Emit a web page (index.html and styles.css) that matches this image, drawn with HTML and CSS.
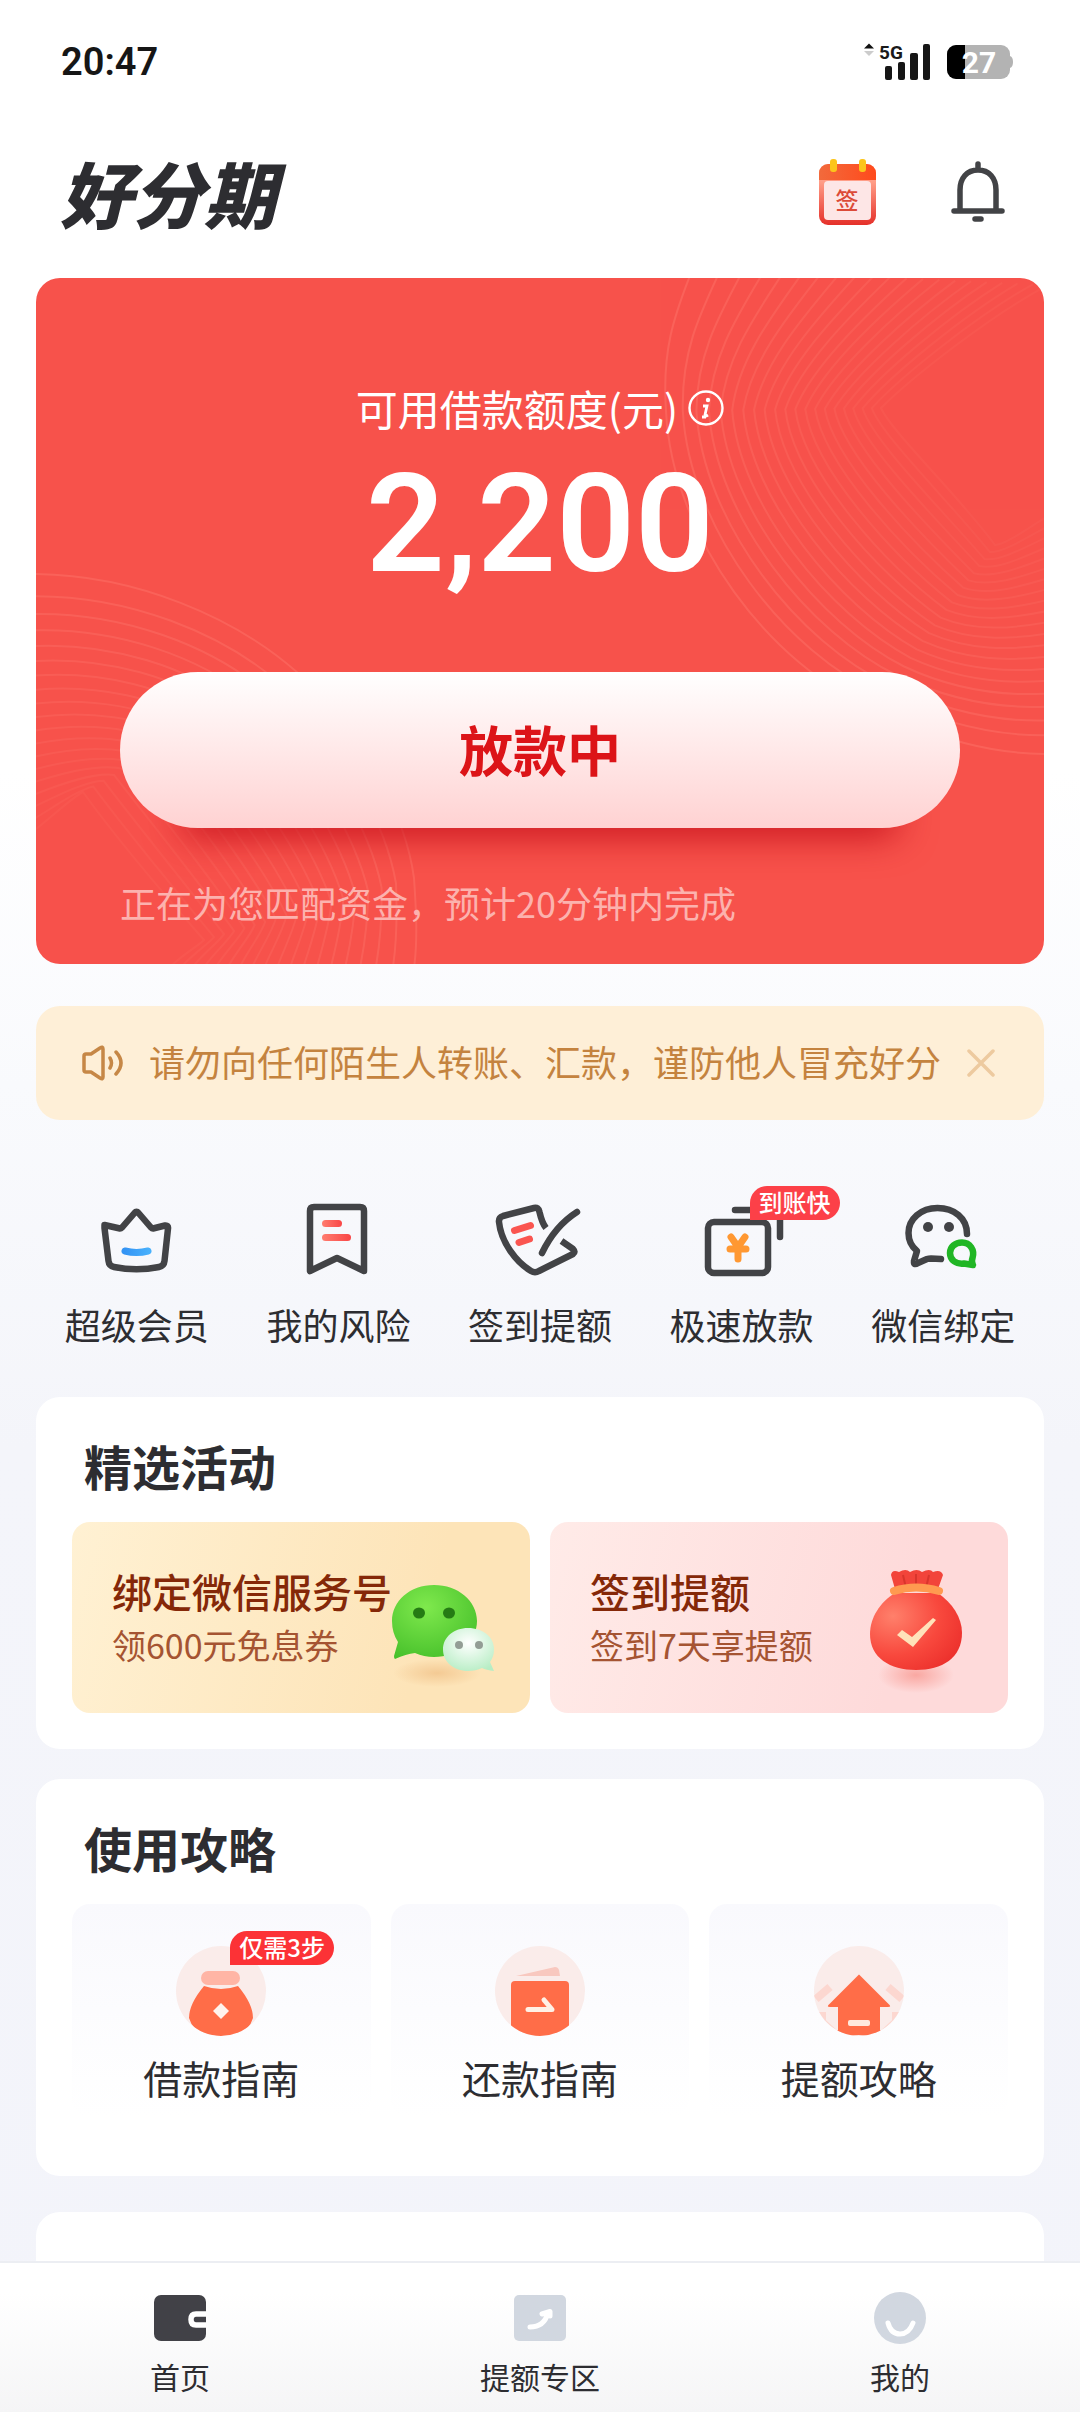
FILE: index.html
```html
<!DOCTYPE html>
<html lang="zh-CN">
<head>
<meta charset="utf-8">
<meta name="viewport" content="width=device-width, initial-scale=1">
<title>好分期</title>
<link rel="stylesheet" href="styles.css">
</head>
<body>
<div class="status">
  <time class="clock">20:47</time>
  <div class="status-icons">
    <svg class="signal" width="70" height="48" viewBox="0 -4 70 48" role="img" aria-label="5G">
      <path d="M4 6.500L9 1.500L14 6.500Z" fill="#111"/>
      <path d="M4 9L9 14L14 9Z" fill="#ccc"/>
      <text x="19" y="17" font-size="19" font-weight="700" font-family="Roboto, sans-serif" fill="#1a1a1a">5G</text>
      <g fill="#161616"><rect x="25" y="24" width="7" height="14" rx="2"/><rect x="38" y="20" width="7" height="18" rx="2"/><rect x="50" y="11" width="8" height="27" rx="2"/><rect x="63" y="2" width="7" height="36" rx="2"/></g>
    </svg>
    <svg width="66" height="36" viewBox="0 0 66 36" role="img" aria-label="27%">
      <rect x="0" y="1" width="63" height="34" rx="9" fill="#b3b3b3"/>
      <path d="M63 12Q66 13 66 18T63 24Z" fill="#b3b3b3"/>
      <path d="M9 1H18V35H9A9 9 0 0 1 0 26V10A9 9 0 0 1 9 1Z" fill="#000"/>
      <text x="32" y="29" text-anchor="middle" font-size="30" font-weight="700" font-family="Roboto, sans-serif" fill="#fff">27</text>
    </svg>
  </div>
</div>

<header class="top">
  <h1 class="logo">好分期</h1>
  <div class="top-actions">
    <button class="icon-btn" aria-label="签到">
      <svg width="58" height="68" viewBox="0 0 58 68">
        <defs>
          <linearGradient id="calBody" x1="0" y1="0" x2="0" y2="1"><stop offset="0" stop-color="#ffb09c"/><stop offset=".3" stop-color="#ff9c86"/><stop offset="1" stop-color="#e5302a"/></linearGradient>
          <linearGradient id="calTop"><stop offset="0" stop-color="#f26a3c"/><stop offset="1" stop-color="#ff4a1c"/></linearGradient>
        </defs>
        <rect x="0" y="6" width="57" height="61" rx="9" fill="url(#calBody)"/>
        <path d="M0 22V15A9 9 0 0 1 9 6H48A9 9 0 0 1 57 15V22Z" fill="url(#calTop)"/>
        <rect x="5" y="23" width="47" height="39" rx="4" fill="#fde6e6"/>
        <rect x="11" y="1" width="7" height="13" rx="3" fill="#fcc51b"/><rect x="40" y="1" width="7" height="13" rx="3" fill="#fcc51b"/>
        <text x="28" y="51" text-anchor="middle" font-size="23" font-weight="500" font-family="Noto Sans CJK SC, sans-serif" fill="#dc4b38">签</text>
      </svg>
    </button>
    <button class="icon-btn" aria-label="消息">
      <svg width="54" height="64" viewBox="0 0 54 64" fill="none" stroke="#424346" stroke-width="5.500" stroke-linecap="round">
        <path d="M27 4V9M9 50V30C9 18 16 10 27 10S45 18 45 30V50M3 51H51M24 59H30"/>
      </svg>
    </button>
  </div>
</header>

<main class="content">
  <section class="hero">
    <svg class="waves waves-right" width="386" height="490" viewBox="0 0 386 490" aria-hidden="true"></svg>
    <svg class="waves waves-left" width="390" height="400" viewBox="0 0 390 400" aria-hidden="true"></svg>
    <p class="hero-label">可用借款额度(元)
      <svg width="36" height="36" viewBox="0 0 36 36" role="img" aria-label="说明"><circle cx="18" cy="18" r="16.500" fill="none" stroke="#fff" stroke-width="2.400"/><circle cx="20" cy="10" r="2.200" fill="#fff"/><path d="M15 16H19L17 25Q17 27 20 25M14 27H18" fill="none" stroke="#fff" stroke-width="2.800"/></svg>
    </p>
    <p class="amount">2,200</p>
    <button class="loan-btn">放款中</button>
    <p class="hero-hint">正在为您匹配资金，预计20分钟内完成</p>
  </section>

  <div class="notice">
    <svg width="44" height="38" viewBox="0 0 44 38" fill="none" stroke="#c68746" stroke-width="3.500" stroke-linejoin="round" stroke-linecap="round"><path d="M4 12Q4 10 6 10H11L20 4Q23 2 23 5V33Q23 36 20 34L11 28H6Q4 28 4 26ZM30 14Q33 19 30 24M36 8Q46 19 36 30"/></svg>
    <p class="notice-text">请勿向任何陌生人转账、汇款，谨防他人冒充好分</p>
    <button class="icon-btn" aria-label="关闭"><svg width="28" height="28" viewBox="0 0 28 28" stroke="#edca9f" stroke-width="3.500" stroke-linecap="round"><path d="M2 2L26 26M26 2L2 26"/></svg></button>
  </div>

  <nav class="quick">
    <a class="quick-item" href="#vip">
      <svg width="96" height="80" viewBox="0 0 96 80"><defs><linearGradient id="blue" gradientUnits="userSpaceOnUse" x1="36" y1="0" x2="60" y2="0"><stop offset="0" stop-color="#3494f4"/><stop offset="1" stop-color="#48b0fc"/></linearGradient><linearGradient id="red"><stop offset="0" stop-color="#ff7d70"/><stop offset="1" stop-color="#f94646"/></linearGradient></defs>
        <path class="ink" d="M15.500 25L31 28.500Q32 28.500 33 27.500L45.500 13Q47.500 10.500 49.500 13L62 27.500Q63 28.500 64 28.500L76 25.500Q79.500 25 79 28.500L75.500 61Q75 66 70 67Q47.500 71.500 25 67Q20 66 19.500 61L15.500 28Z"/>
        <path d="M36 51Q47.500 54 59 51" fill="none" stroke="url(#blue)" stroke-width="7" stroke-linecap="round"/></svg>
      <span>超级会员</span>
    </a>
    <a class="quick-item" href="#risk">
      <svg width="96" height="80" viewBox="0 0 96 80"><path class="ink" d="M20 11Q20 7 24 7H70Q74 7 74 11V71L47 58L20 71Z"/><rect x="32" y="20" width="20" height="7" rx="3.500" fill="url(#red)"/><rect x="32" y="34" width="29" height="7" rx="3.500" fill="url(#red)"/></svg>
      <span>我的风险</span>
    </a>
    <a class="quick-item" href="#sign">
      <svg width="96" height="80" viewBox="0 0 96 80"><path class="ink butt" d="M54 28Q50 23 47.500 12Q46.500 7 42 8L11 16Q6.500 17.500 7 22C9 42 24 62 39 71Q43 73.500 47 71L81 54Q84 52 81 49L69.500 41"/><path class="ink" d="M85 12Q63 26 50 53"/><path d="M22.500 30.500L38.500 25.500M27 42.500L37.500 39" fill="none" stroke="#fa5550" stroke-width="7" stroke-linecap="round"/></svg>
      <span>签到提额</span>
    </a>
    <a class="quick-item" href="#fast">
      <svg width="96" height="80" viewBox="0 0 96 80"><rect class="ink" x="14" y="22" width="60" height="51" rx="6"/><path class="ink" d="M41 10H80Q86 10 86 16V37"/><path d="M37 37L44 47L51 37M36 49H52M44 49V59" fill="none" stroke="#ff9832" stroke-width="7" stroke-linecap="round" stroke-linejoin="round"/></svg>
      <em class="badge">到账快</em>
      <span>极速放款</span>
    </a>
    <a class="quick-item" href="#wechat">
      <svg width="96" height="80" viewBox="0 0 96 80"><path class="ink" d="M72 34C72 18 59 8 42.500 8S13.500 19 13.500 33Q13.500 44 22 51L19 61Q18.500 66 23 63L32 59Q33.500 58.500 36 58.500L46 59"/><circle cx="33" cy="27" r="5" fill="#424346"/><circle cx="54" cy="27" r="5" fill="#424346"/><path d="M67 42.500C60 42.500 55 47 55 53C55 60 61 64.500 69 63.500L78 65Q76 62 77.500 58C80 50 75 42.500 67 42.500Z" fill="none" stroke="#21b625" stroke-width="6.500" stroke-linejoin="round"/></svg>
      <span>微信绑定</span>
    </a>
  </nav>

  <section class="panel">
    <h2>精选活动</h2>
    <div class="promos">
      <a class="promo gold" href="#bind">
        <span class="promo-copy"><strong>绑定微信服务号</strong><span>领600元免息券</span></span>
        <svg class="promo-art" width="110" height="116" viewBox="0 0 110 116" aria-hidden="true">
          <defs><radialGradient id="wg" cx=".4" cy=".3" r=".8"><stop offset="0" stop-color="#7fe94d"/><stop offset="1" stop-color="#44be29"/></radialGradient><radialGradient id="ww" cx=".5" cy=".35" r=".7"><stop offset="0" stop-color="#fff"/><stop offset="1" stop-color="#b7edc4"/></radialGradient><radialGradient id="ws"><stop offset="0" stop-color="#e6a35e" stop-opacity=".4"/><stop offset="1" stop-color="#e6a35e" stop-opacity="0"/></radialGradient></defs>
          <ellipse cx="49" cy="93" rx="44" ry="14" fill="url(#ws)"/>
          <path d="M46 5C70 5 89 21 89 41S70 77 46 77Q36 77 27 73Q18 74 7 79Q6 79 6 76L10 62Q4 53 4 41C4 21 22 5 46 5Z" fill="url(#wg)"/>
          <ellipse cx="31" cy="33" rx="6" ry="5.500" fill="#257b14"/><ellipse cx="61" cy="33" rx="6" ry="5.500" fill="#257b14"/>
          <path d="M80 48C95 48 106 57 106 69Q106 77 102 82L106 91Q98 90 94 88Q88 91 80 91C66 91 55 82 55 69.500S66 48 80 48Z" fill="url(#ww)"/>
          <circle cx="71" cy="65" r="4" fill="#939d95"/><circle cx="91" cy="65" r="4" fill="#939d95"/>
        </svg>
      </a>
      <a class="promo pink" href="#signin">
        <span class="promo-copy"><strong>签到提额</strong><span>签到7天享提额</span></span>
        <svg class="promo-art" width="102" height="132" viewBox="0 0 102 132" aria-hidden="true">
          <defs><radialGradient id="bg" cx=".25" cy=".3" r=".85"><stop offset="0" stop-color="#ff806b"/><stop offset=".6" stop-color="#f8483d"/><stop offset="1" stop-color="#ec302c"/></radialGradient><radialGradient id="bs"><stop offset="0" stop-color="#f57569" stop-opacity=".5"/><stop offset="1" stop-color="#f57569" stop-opacity="0"/></radialGradient></defs>
          <ellipse cx="51" cy="111" rx="38" ry="18" fill="url(#bs)"/>
          <path d="M30 25L26 11Q27 5 34 8Q41 4 45 8Q52 4 57 8Q65 4 68 8Q76 5 78 11L73 25Z" fill="#f2443a"/>
          <path d="M38 11L41 24M51 10V24M64 11L61 24" stroke="#d9352c" stroke-width="2" fill="none"/>
          <path d="M30 29H73C87 39 97 53 97 69C97 94 77 106 51 106S5 94 5 70C5 54 15 38 30 29Z" fill="url(#bg)"/>
          <path d="M29 27Q51 20 74 27" fill="none" stroke="#ff9a50" stroke-width="8" stroke-linecap="round"/>
          <path d="M32 71L37 66L47 73L68 54L71 56L48 83Z" fill="#ffe2ba"/>
        </svg>
      </a>
    </div>
  </section>

  <section class="panel guides-panel">
    <h2>使用攻略</h2>
    <div class="guides">
      <a class="guide" href="#borrow">
        <svg width="90" height="90" viewBox="0 0 90 90"><defs><clipPath id="round"><circle cx="45" cy="45" r="45"/></clipPath></defs><circle cx="45" cy="45" r="45" fill="#faecea"/><rect x="25" y="25" width="39" height="14" rx="7" fill="#ffb5a5"/><path d="M28 40Q45 46 62 40Q77 58 77 72Q72 90 45 90T13 72Q13 58 28 40Z" fill="#ff6d48" clip-path="url(#round)"/><path d="M45 57L53 65L45 73L37 65Z" fill="#fff3ed"/></svg>
        <em class="badge">仅需3步</em>
        <span>借款指南</span>
      </a>
      <a class="guide" href="#repay">
        <svg width="90" height="90" viewBox="0 0 90 90"><circle cx="45" cy="45" r="45" fill="#faecea"/><path d="M21 30L60 21Q63 21 64 24L65 30Z" fill="#f8c8bf"/><path d="M16 39Q16 35 20 35H70Q74 35 74 39V90H16Z" fill="#ff6d48" clip-path="url(#round)"/><path d="M33 63.500H57L49 54" fill="none" stroke="#fff1e6" stroke-width="5" stroke-linejoin="round" stroke-linecap="round"/></svg>
        <span>还款指南</span>
      </a>
      <a class="guide" href="#raise">
        <svg width="90" height="90" viewBox="0 0 90 90"><circle cx="45" cy="45" r="45" fill="#faecea"/><g clip-path="url(#round)"><path d="M16 41L2 53M74 41L88 53M8 66V76L20 87M82 66V76L70 87" stroke="#fcd7d0" stroke-width="8" fill="none"/><path d="M45 27L76 58Q79 62 74 62H67V90H23V62H16Q11 62 14 58Z" fill="#ff6d48" stroke="#faecea" stroke-width="2"/></g><rect x="34" y="74" width="22" height="6" rx="2" fill="#ffe9dd"/></svg>
        <span>提额攻略</span>
      </a>
    </div>
  </section>

  <section class="panel next-panel"></section>
</main>

<nav class="tabs">
  <a href="#home"><svg width="52" height="52" viewBox="0 0 52 52"><rect y="3" width="52" height="46" rx="7" fill="#414147"/><path d="M52 22H42Q37 22 37 27.500T42 33H52" fill="none" stroke="#fff" stroke-width="5.500"/></svg><span>首页</span></a>
  <a href="#limit"><svg width="52" height="52" viewBox="0 0 52 52"><rect y="3" width="52" height="46" rx="5" fill="#d1d7e0"/><path d="M16 35Q30 35 34 21M28 22L36 19.500L36 24" fill="none" stroke="#fff" stroke-width="5" stroke-linecap="round" stroke-linejoin="round"/></svg><span>提额专区</span></a>
  <a href="#me"><svg width="52" height="52" viewBox="0 0 52 52"><circle cx="26" cy="26" r="26" fill="#d1d7e0"/><path d="M14 31Q17 42 26 42T39 31" fill="none" stroke="#fff" stroke-width="5" stroke-linecap="round"/></svg><span>我的</span></a>
</nav>
<script src="waves.js"></script>
</body>
</html>
```
FILE: styles.css
```css
* { box-sizing: border-box; margin: 0; padding: 0; }

body {
  min-height: 100vh;
  display: flex;
  flex-direction: column;
  font-family: "Noto Sans CJK SC", sans-serif;
  color: #2d2d31;
  background: linear-gradient(#fff 0, #fff 32%, #f9fafd 45%, #f4f5fa 60%, #f3f4fa 100%);
}

a { color: inherit; text-decoration: none; }
svg { display: block; flex: none; }
button { border: 0; background: none; font: inherit; cursor: pointer; }

.status {
  height: 124px;
  padding: 0 67px 0 61px;
  display: flex;
  align-items: center;
  justify-content: space-between;
}
.clock { font: 600 38px/44px Roboto, sans-serif; color: #161616; }
.status-icons { display: flex; align-items: center; gap: 17px; }

.top {
  height: 136px;
  margin-bottom: 18px;
  padding: 0 75px 0 60px;
  display: flex;
  align-items: center;
  justify-content: space-between;
}
.logo { font-size: 72px; line-height: 80px; font-weight: 900; font-style: italic; color: #2d2d31; }
.top-actions { display: flex; align-items: center; gap: 74px; }

.content { flex: 1; display: flex; flex-direction: column; padding: 0 36px; }

.hero {
  position: relative;
  overflow: hidden;
  height: 686px;
  padding: 102px 84px 0;
  border-radius: 24px;
  background: #f7524b;
  color: #fff;
}
.hero > * { position: relative; }
.hero > .waves { position: absolute; fill: none; stroke: #ff7a70; stroke-width: 2; }
.waves-right { top: 0; right: 0; opacity: .4; }
.waves-left { bottom: 0; left: 0; opacity: .4; }
.hero-label {
  display: flex;
  align-items: center;
  justify-content: center;
  gap: 10px;
  font-size: 42px;
  line-height: 56px;
}
.amount {
  margin-top: 8px;
  font: 600 138px/160px Roboto, sans-serif;
  text-align: center;
}
.loan-btn {
  display: block;
  width: 100%;
  height: 156px;
  margin-top: 68px;
  padding-bottom: 4px;
  border-radius: 78px;
  background: linear-gradient(#fff, #ffd2d2);
  box-shadow: 0 68px 36px -60px #c8141e;
  font-size: 54px;
  font-weight: 700;
  color: #dc1418;
}
.hero-hint { margin-top: 46px; font-size: 36px; line-height: 56px; color: #fcb2ae; }

.notice {
  display: flex;
  align-items: center;
  justify-content: space-between;
  height: 114px;
  margin-top: 42px;
  padding: 0 49px 0 44px;
  border-radius: 24px;
  background: #feefd7;
}
.notice-text {
  flex: 1;
  margin: 0 24px 0 25px;
  padding-bottom: 4px;
  overflow: hidden;
  white-space: nowrap;
  font-size: 36px;
  line-height: 52px;
  color: #c4833f;
}

.quick { display: grid; grid-template-columns: repeat(5, 1fr); margin-top: 80px; }
.quick-item {
  position: relative;
  display: flex;
  flex-direction: column;
  align-items: center;
  gap: 18px;
  font-size: 36px;
  line-height: 52px;
}
.ink { fill: none; stroke: #424346; stroke-width: 6.5px; stroke-linecap: round; stroke-linejoin: round; }
.butt { stroke-linecap: butt; }

.badge {
  position: absolute;
  height: 34px;
  padding: 0 9px;
  border-radius: 17px 17px 17px 0;
  background: #fc4048;
  color: #fff;
  font-size: 24px;
  line-height: 32px;
  font-style: normal;
  font-weight: 500;
  white-space: nowrap;
}
.quick-item .badge { left: calc(50% + 8px); top: -14px; }

.panel { margin-top: 30px; padding: 36px; border-radius: 24px; background: #fff; }
.quick + .panel { margin-top: 47px; }
.panel h2 { padding-left: 12px; font-size: 48px; line-height: 64px; font-weight: 700; }

.promos { display: grid; grid-template-columns: 1fr 1fr; gap: 20px; margin-top: 25px; }
.promo {
  position: relative;
  height: 191px;
  padding: 41px 0 0 40px;
  border-radius: 18px;
  color: #852808;
}
.gold { background: linear-gradient(105deg, #fff1d3, #fde4b8 75%); }
.pink { background: linear-gradient(105deg, #ffebe8, #fedada 75%); }
.promo-copy { display: flex; flex-direction: column; font-size: 34px; line-height: 52px; }
.promo-copy strong { font-size: 40px; line-height: 56px; font-weight: 500; }
.promo-copy span { color: #a55432; }
.promo-art { position: absolute; right: 32px; bottom: 17px; }
.pink .promo-art { right: 41px; }

.guides-panel { padding-bottom: 59px; }
.guides { display: grid; grid-template-columns: repeat(3, 1fr); gap: 20px; margin-top: 25px; }
.guide {
  position: relative;
  display: flex;
  flex-direction: column;
  align-items: center;
  gap: 13px;
  height: 213px;
  padding-top: 42px;
  border-radius: 18px;
  background: linear-gradient(#f9f9fd, #fff);
  font-size: 39px;
  line-height: 56px;
}
.guide .badge { left: calc(50% + 9px); top: 27px; background: #fc3236; }

.next-panel { flex: 1; min-height: 49px; margin-top: 36px; padding: 0; border-radius: 24px 24px 0 0; }

.tabs {
  display: grid;
  grid-template-columns: repeat(3, 1fr);
  height: 151px;
  padding-top: 29px;
  border-top: 2px solid #eceef3;
  background: linear-gradient(#fff 20%, #f5f5f6);
}
.tabs a { display: flex; flex-direction: column; align-items: center; gap: 10px; font-size: 30px; line-height: 44px; }
```
FILE: waves.js
```js
// Contour lines on the card: each line is blended between an outer and an inner curve.
function drawWaves(selector, outer, inner, count) {
  const svg = document.querySelector(selector);
  for (let i = 0; i < count; i++) {
    const t = Math.pow(i / (count - 1), 0.85);
    const p = outer.map((v, k) => (v + (inner[k] - v) * t).toFixed(1));
    const path = document.createElementNS("http://www.w3.org/2000/svg", "path");
    path.setAttribute("d", "M" + p.slice(0, 2) + "C" + p.slice(2).join(" "));
    path.setAttribute("opacity", (1 - t * 0.7).toFixed(2));
    svg.appendChild(path);
  }
}

drawWaves(".waves-right",
  [35, -10, 15, 40, 4, 73, 8, 133, 14, 260, 115, 390, 215, 430, 280, 462, 335, 476, 390, 476],
  [390, 7, 333, 37, 253, 100, 223, 130, 233, 153, 300, 217, 337, 267, 347, 267, 370, 250, 390, 238], 21);
drawWaves(".waves-left",
  [-5, 10, 100, 10, 200, 54, 262, 109, 330, 174, 370, 254, 378, 314, 380, 344, 382, 374, 378, 404],
  [-5, 269, 15, 254, 35, 234, 47, 228, 80, 274, 140, 344, 168, 376, 160, 384, 140, 394, 129, 409], 19);
```
